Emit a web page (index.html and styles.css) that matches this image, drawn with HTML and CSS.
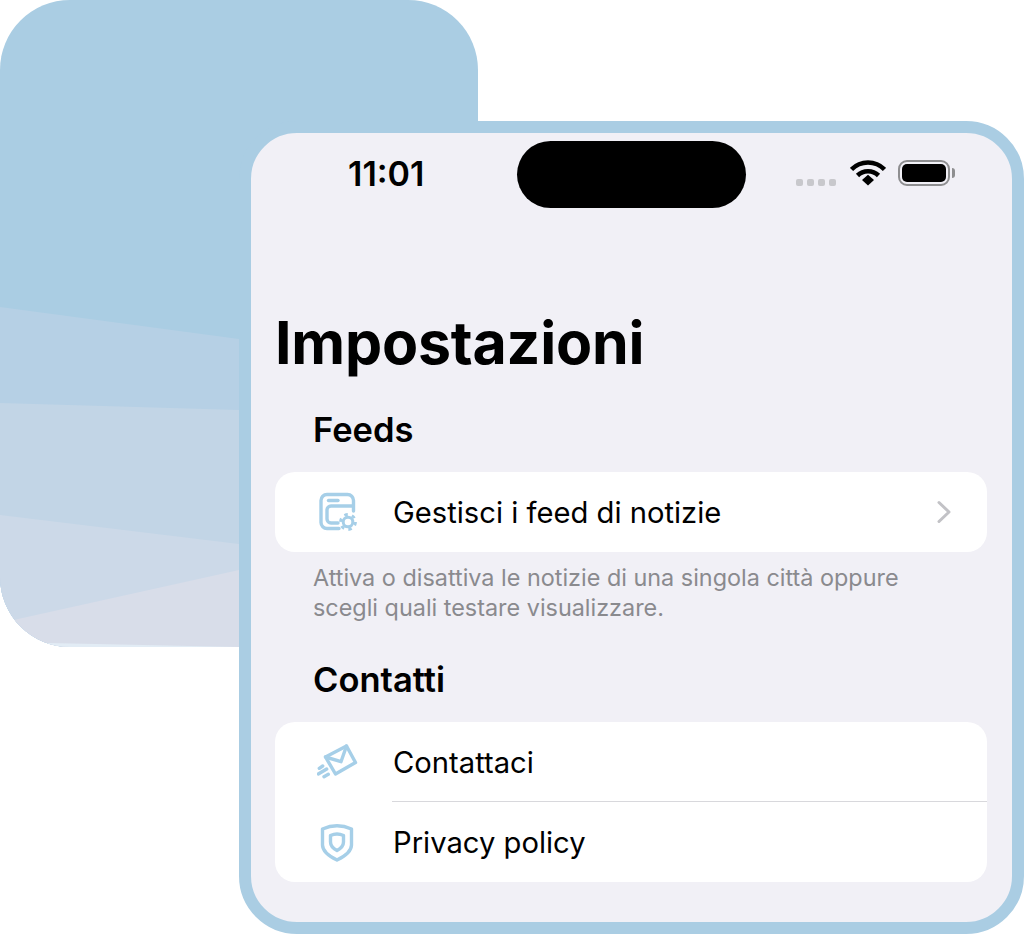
FILE: index.html
```html
<!DOCTYPE html>
<html lang="en">
<head>
    <meta charset="UTF-8">
    <meta name="viewport" content="width=device-width, initial-scale=1.0">
    <title>Impostazioni</title>
    <link rel="stylesheet" href="styles.css">
</head>
<body>
    <div class="stage">
        <!-- Card behind the phone -->
        <div class="back-card">
            <svg class="waves" width="478" height="647" viewBox="0 0 478 647">
                <polygon fill="#b6d0e5" points="0,307 239,339 478,375 478,647 0,647"/>
                <polygon fill="#c2d5e6" points="0,403 239,410 478,416 478,647 0,647"/>
                <polygon fill="#ccd9e8" points="0,515 239,544 478,572 478,647 0,647"/>
                <polygon fill="#d8dde9" points="0,623 239,570 478,520 478,647 0,647"/>
                <polygon fill="#e2ecf5" points="0,642 239,647 0,647"/>
            </svg>
        </div>

        <div class="phone">
            <div class="status-bar">
                <span class="time">11:01</span>
                <div class="island"></div>
                <div class="status-icons">
                    <div class="signal"><i></i><i></i><i></i><i></i></div>
                    <svg class="wifi" width="36" height="26" viewBox="0 0 36 26">
                        <path d="M1.500 9.500 A23 23 0 0 1 34.500 9.500" fill="none" stroke="#000" stroke-width="4.600"/>
                        <path d="M7.500 15.500 A15 15 0 0 1 28.500 15.500" fill="none" stroke="#000" stroke-width="4.600"/>
                        <path d="M12 20 L18 14.800 L24 20 L18 25.500 Z" fill="#000"/>
                    </svg>
                    <div class="battery"><div class="battery-fill"></div></div>
                    <div class="battery-cap"></div>
                </div>
            </div>

            <h1 class="page-title">Impostazioni</h1>

            <h2 class="section-title">Feeds</h2>
            <div class="list">
                <div class="row">
                    <svg class="row-icon" width="42" height="44" viewBox="0 0 42 44" fill="none" stroke="#a6cfe8" stroke-width="3.400" stroke-linecap="round" stroke-linejoin="round">
                        <path d="M22 38.500 H10 A6 6 0 0 1 4 32.500 V10.500 A6 6 0 0 1 10 4.500 H30.500 A6 6 0 0 1 36.500 10.500 V21"/>
                        <path d="M21 33 H14 A4 4 0 0 1 10 29 V20 A4 4 0 0 1 14 16 H35"/>
                        <path d="M11.500 10.500 H21"/>
                        <circle cx="31" cy="32" r="4.800" stroke-width="3"/>
                        <circle cx="31" cy="32" r="7.500" stroke-width="2.800" stroke-dasharray="3.500 4.350" stroke-linecap="butt"/>
                    </svg>
                    <span class="row-label">Gestisci i feed di notizie</span>
                    <svg class="chevron" width="16" height="24" viewBox="0 0 16 24" fill="none" stroke="#c2c2c6" stroke-width="3" stroke-linecap="round" stroke-linejoin="round">
                        <path d="M3 2.500 L13 12 L3 21.500"/>
                    </svg>
                </div>
            </div>
            <p class="section-note">Attiva o disattiva le notizie di una singola città oppure<br>scegli quali testare visualizzare.</p>

            <h2 class="section-title contacts">Contatti</h2>
            <div class="list">
                <div class="row">
                    <svg class="row-icon" width="42" height="44" viewBox="0 0 42 44" fill="none" stroke="#a6cfe8" stroke-width="3.400" stroke-linecap="round" stroke-linejoin="round">
                        <path d="M8.500 17 L29.500 6 L38.500 22.500 L18.500 34 Z"/>
                        <path d="M8.500 17 L24 21.700 L29.500 6"/>
                        <path d="M2.300 28.300 L5.700 26 M1.300 34 L9.700 29 M7 36.700 L11.300 34.300"/>
                    </svg>
                    <span class="row-label">Contattaci</span>
                </div>
                <div class="row divided">
                    <svg class="row-icon" width="42" height="44" viewBox="0 0 42 44" fill="none" stroke="#a6cfe8" stroke-width="3.400" stroke-linecap="round" stroke-linejoin="round">
                        <path d="M5.500 9 Q20 2.500 34.500 9 V25 Q34.500 33 20 40 Q5.500 33 5.500 25 Z"/>
                        <path d="M13.500 15.500 Q20 12.500 26.500 15.500 V22 Q26.500 27 20 30.500 Q13.500 27 13.500 22 Z"/>
                    </svg>
                    <span class="row-label">Privacy policy</span>
                </div>
            </div>
        </div>
    </div>
</body>
</html>
```

FILE: styles.css
```css
body {
    margin: 0;
    background-color: #fff;
    font-family: Inter, "Liberation Sans", Arial, sans-serif;
    color: #000;
}

.stage {
    position: relative;
    width: 1024px;
    height: 934px;
    overflow: hidden;
    padding-top: 121px;
    box-sizing: border-box;
}

.back-card {
    position: absolute;
    left: 0;
    top: 0;
    width: 478px;
    height: 647px;
    border-radius: 70px;
    background-color: #aacde3;
    overflow: hidden;
}

.waves {
    display: block;
}

.phone {
    position: relative;
    box-sizing: border-box;
    width: 785px;
    height: 813px;
    margin-left: 239px;
    padding: 8px 25px 0 24px;
    background-color: #f1f0f6;
    border: 12px solid #aacde3;
    border-radius: 58px;
}

.status-bar {
    display: flex;
    align-items: flex-start;
    height: 67px;
}

.time {
    box-sizing: border-box;
    width: 242px;
    padding: 15px 0 0 73px;
    font-size: 34px;
    font-weight: 600;
    line-height: 36px;
}

.island {
    width: 229px;
    height: 67px;
    border-radius: 34px;
    background-color: #000;
}

.status-icons {
    display: flex;
    align-items: center;
    height: 26px;
    margin-top: 19px;
    padding-left: 50px;
}

.signal {
    display: flex;
    gap: 4px;
    margin-top: 19px;
}

.signal i {
    width: 7px;
    height: 7px;
    border-radius: 2px;
    background-color: #c8c8cc;
}

.wifi {
    margin-left: 14px;
}

.battery {
    box-sizing: border-box;
    width: 52px;
    height: 26px;
    margin-left: 12px;
    padding: 2px;
    border: 2px solid #8e8e90;
    border-radius: 9px;
}

.battery-fill {
    height: 100%;
    border-radius: 5px;
    background-color: #000;
}

.battery-cap {
    width: 3px;
    height: 10px;
    margin-left: 2px;
    border-radius: 0 3px 3px 0;
    background-color: #8e8e90;
}

.page-title {
    margin: 100px 0 0;
    font-size: 59px;
    font-weight: 700;
    line-height: 70px;
    letter-spacing: -0.2px;
}

.section-title {
    margin: 32px 0 0 38px;
    font-size: 34.500px;
    font-weight: 600;
    line-height: 40px;
}

.section-title.contacts {
    margin-top: 37px;
}

.list {
    margin-top: 22px;
    border-radius: 20px;
    background-color: #fff;
    overflow: hidden;
}

.row {
    display: flex;
    align-items: center;
    height: 80px;
    box-sizing: border-box;
    padding-left: 42px;
}

.row-icon {
    flex: none;
}

.row-label {
    flex: 1;
    margin-left: 34px;
    font-size: 29.200px;
}

.chevron {
    margin-right: 35px;
}

.divided {
    position: relative;
}

.divided::before {
    content: "";
    position: absolute;
    left: 117px;
    right: 0;
    top: -1px;
    height: 1px;
    background-color: #d8d8dc;
}

.section-note {
    margin: 11px 0 0 38px;
    font-size: 23.400px;
    line-height: 30px;
    color: #8a8a8e;
}
```
